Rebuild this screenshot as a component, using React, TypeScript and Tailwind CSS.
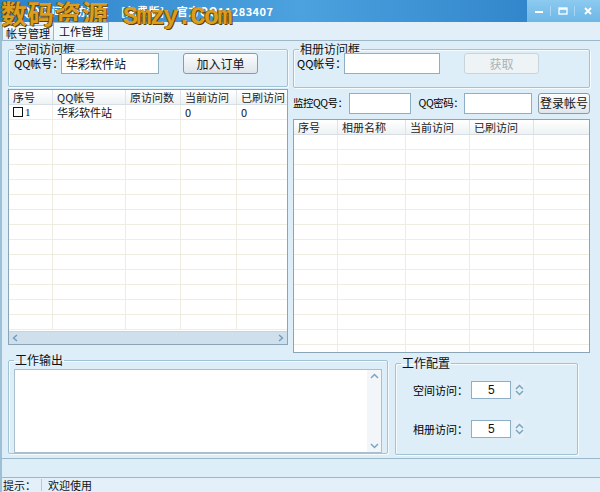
import React from "react";

const F = "font-['Noto_Sans_CJK_SC','Liberation_Sans',sans-serif]";

function Fieldset({ title, className, children }: { title: string; className?: string; children?: React.ReactNode }) {
  return (
    <fieldset className={`border border-[#9ec4d6] rounded-[2px] shadow-[inset_1px_1px_0_#f6fbfe,1px_1px_0_#f6fbfe] ${className ?? ""}`}>
      <legend className="ml-[5px] px-[1px] text-[12px] leading-[12px] text-[#111]">{title}</legend>
      {children}
    </fieldset>
  );
}

function TextInput({ value, className }: { value?: string; className?: string }) {
  return (
    <div className={`bg-white border border-[#8fb0c4] h-[21px] shrink-0 flex items-center px-[4px] text-[12px] text-[#111] ${className ?? ""}`}>
      {value}
    </div>
  );
}

function Btn({ label, className, disabled }: { label: string; className?: string; disabled?: boolean }) {
  return (
    <div
      className={`h-[21px] shrink-0 flex items-center justify-center rounded-[3px] border text-[12px] ${
        disabled
          ? "border-[#c8d4dc] bg-[#eef3f6] text-[#a9b2b8]"
          : "border-[#8a9aa6] bg-gradient-to-b from-[#fbfcfd] to-[#dfe6eb] text-[#111]"
      } ${className ?? ""}`}
    >
      {label}
    </div>
  );
}

function Table({ cols, rows, count, className, children }: { cols: { t: string; w: number }[]; rows: string[][]; count: number; className?: string; children?: React.ReactNode }) {
  const all = Array.from({ length: count }, (_, i) => rows[i] ?? cols.map(() => ""));
  return (
    <div className={`bg-white border border-[#8aa6b6] flex flex-col overflow-hidden ${className ?? ""}`}>
      <div className="flex h-[15px] bg-gradient-to-b from-white to-[#eef2f4] border-b border-[#d8dfe4] shrink-0">
        {cols.map((c, i) => (
          <div key={i} style={{ width: c.w }} className="shrink-0 flex items-center pl-[4px] text-[11px] text-[#222] border-r border-[#dde3e7] leading-none overflow-hidden">
            {c.t}
          </div>
        ))}
      </div>
      <div className="flex-1 overflow-hidden">
        {all.map((r, ri) => (
          <div key={ri} className="flex h-[15px] border-b border-[#efece2]">
            {cols.map((c, ci) => (
              <div key={ci} style={{ width: c.w }} className="shrink-0 flex items-center pl-[4px] text-[11px] text-[#111] border-r border-[#efece2] leading-none overflow-hidden">
                {ri === 0 && ci === 0 && r[0] !== "" ? (
                  <span className="flex items-center gap-[2px]">
                    <span className="w-[10px] h-[10px] border-[1.5px] border-[#111] inline-block" />
                    <span className="font-['Liberation_Serif',serif]">{r[0]}</span>
                  </span>
                ) : (
                  r[ci]
                )}
              </div>
            ))}
          </div>
        ))}
      </div>
      {children}
    </div>
  );
}

function Spin({ value }: { value: string }) {
  return (
    <div className="flex items-center gap-[3px]">
      <div className="w-[40px] h-[18px] bg-white border border-[#8fb0c4] flex items-center pl-[16px] text-[12px] text-[#111] font-['Liberation_Sans',sans-serif]">
        {value}
      </div>
      <div className="flex flex-col items-center justify-center w-[10px] h-[18px] bg-[#e4eff7]">
        <svg width="9" height="6" viewBox="0 0 9 6"><path d="M1 5 L4.5 1.5 L8 5" fill="none" stroke="#7aa6c4" strokeWidth="1.5" /></svg>
        <svg width="9" height="6" viewBox="0 0 9 6"><path d="M1 1 L4.5 4.5 L8 1" fill="none" stroke="#7aa6c4" strokeWidth="1.5" /></svg>
      </div>
    </div>
  );
}

export default function App() {
  const leftCols = [
    { t: "序号", w: 44 },
    { t: "QQ帐号", w: 73 },
    { t: "原访问数", w: 55 },
    { t: "当前访问", w: 56 },
    { t: "已刷访问", w: 52 },
  ];
  const rightCols = [
    { t: "序号", w: 44 },
    { t: "相册名称", w: 68 },
    { t: "当前访问", w: 64 },
    { t: "已刷访问", w: 64 },
    { t: "", w: 56 },
  ];
  return (
    <div className={`${F} whitespace-nowrap w-[600px] h-[492px] bg-[#dcecf7] flex flex-col overflow-hidden relative`}>
      {/* title bar */}
      <div className="h-[22px] shrink-0 flex bg-gradient-to-r from-[#2d83ca] via-[#4ba2de] to-[#2a7dc5] relative">
        <div className="flex-1 flex items-center pl-[22px] text-white text-[11px] font-bold whitespace-pre tracking-[0.5px]">
          {"QQ空间刷访问王    [免费版]    官方QQ11283407"}
        </div>
        <div className="w-[73px] flex items-center bg-gradient-to-b from-[#8ccaf0] to-[#6db7e6]">
          <div className="w-[24px] flex justify-center border-r border-[#a6d6f4]">
            <svg width="10" height="10" viewBox="0 0 10 10"><path d="M1 6 H9" stroke="white" strokeWidth="2" /></svg>
          </div>
          <div className="w-[24px] flex justify-center border-r border-[#a6d6f4]">
            <svg width="10" height="10" viewBox="0 0 10 10"><rect x="1" y="2" width="8" height="6" fill="none" stroke="white" strokeWidth="1.3" /><path d="M1 3 H9" stroke="white" strokeWidth="1.5" /></svg>
          </div>
          <div className="flex-1 flex justify-center">
            <svg width="10" height="10" viewBox="0 0 10 10"><path d="M2 2 L8 8 M8 2 L2 8" stroke="white" strokeWidth="1.8" /></svg>
          </div>
        </div>
        {/* watermark overlay */}
        <div className="absolute left-[1px] top-[-2px] flex items-baseline gap-[14px] pointer-events-none">
          <span className="text-[26px] font-bold leading-[30px] text-[#dc9c1c] tracking-[1px] [text-shadow:1px_1px_0_#5e4006,-1px_0_0_#7a5510]">数码资源</span>
          <span className="text-[25px] font-bold leading-[30px] text-[#dc9c1c] tracking-[-1.5px] font-['Liberation_Mono',monospace] [text-shadow:1px_1px_0_#5e4006,-1px_0_0_#7a5510]">Smzy.Com</span>
        </div>
      </div>

      {/* tab strip */}
      <div className="h-[18px] shrink-0 bg-[#e3eff8] flex items-end pl-[2px]">
        <div className="h-[15px] px-[3px] flex items-center text-[11px] text-[#111] border border-b-0 border-[#9ab8c8] bg-gradient-to-b from-[#f4f9fc] to-[#e2eef6]">帐号管理</div>
        <div className="h-[18px] px-[5px] flex items-center text-[11px] text-[#111] border border-b-0 border-[#9ab8c8] bg-[#f1f8fc] -ml-[1px] relative z-10">工作管理</div>
      </div>

      {/* tab panel */}
      <div className="h-[419px] shrink-0 border-t border-b border-[#9ab8c8] bg-[#deeef8] flex flex-col px-[8px] pt-[2px]">
        <div className="flex gap-[5px]">
          {/* left column */}
          <div className="w-[280px] flex flex-col">
            <Fieldset title="空间访问框" className="h-[44px]">
              <div className="flex items-center h-full pl-[5px] -mt-[2px]">
                <span className="text-[11px] w-[47px]">QQ帐号：</span>
                <TextInput value="华彩软件站" className="w-[98px]" />
                <Btn label="加入订单" className="w-[75px] ml-[24px]" />
              </div>
            </Fieldset>
            <Table cols={leftCols} rows={[["1", "华彩软件站", "", "0", "0"]]} count={15} className="h-[256px] mt-[2px]">
              <div className="h-[13px] shrink-0 bg-[#cfe0ec] flex items-center justify-between px-[3px] border-t border-[#c0d4e2]">
                <svg width="6" height="8" viewBox="0 0 6 8"><path d="M5 1 L1.5 4 L5 7" fill="none" stroke="#6d9cc0" strokeWidth="1.4" /></svg>
                <svg width="6" height="8" viewBox="0 0 6 8"><path d="M1 1 L4.5 4 L1 7" fill="none" stroke="#6d9cc0" strokeWidth="1.4" /></svg>
              </div>
            </Table>
          </div>
          {/* right column */}
          <div className="w-[297px] flex flex-col">
            <Fieldset title="相册访问框" className="h-[45px]">
              <div className="flex items-center h-full pl-[3px] -mt-[2px]">
                <span className="text-[11px] w-[47px]">QQ帐号：</span>
                <TextInput className="w-[96px]" />
                <Btn label="获取" disabled className="w-[75px] ml-[24px]" />
              </div>
            </Fieldset>
            <div className="flex items-center mt-[5px] h-[20px]">
              <span className="text-[10.5px] tracking-[-0.5px] shrink-0 pr-[1px]">监控QQ号：</span>
              <TextInput className="w-[62px] h-[20px]" />
              <span className="text-[10.5px] tracking-[-0.5px] shrink-0 ml-[8px] pr-[1px]">QQ密码：</span>
              <TextInput className="w-[68px] h-[20px]" />
              <Btn label="登录帐号" className="w-[52px] ml-auto h-[20px] text-[11px]" />
            </div>
            <Table cols={rightCols} rows={[]} count={15} className="h-[234px] mt-[6px]" />
          </div>
        </div>

        {/* bottom row */}
        <div className="flex mt-[1px]">
          <Fieldset title="工作输出" className="w-[380px] h-[100px]">
            <div className="mx-[5px] mt-[3px] h-[84px] bg-white border border-[#a9c0cc] flex justify-end">
              <div className="w-[14px] h-full bg-[#f2f6f8] flex flex-col justify-between items-center py-[3px]">
                <svg width="9" height="6" viewBox="0 0 9 6"><path d="M1 5 L4.5 1.5 L8 5" fill="none" stroke="#7aa6c4" strokeWidth="1.5" /></svg>
                <svg width="9" height="6" viewBox="0 0 9 6"><path d="M1 1 L4.5 4.5 L8 1" fill="none" stroke="#7aa6c4" strokeWidth="1.5" /></svg>
              </div>
            </div>
          </Fieldset>
          <Fieldset title="工作配置" className="w-[183px] h-[98px] ml-[7px] mt-[3px]">
            <div className="flex flex-col pl-[17px] pt-[12px] gap-[21px]">
              <div className="flex items-center">
                <span className="text-[11px] w-[58px]">空间访问：</span>
                <Spin value="5" />
              </div>
              <div className="flex items-center">
                <span className="text-[11px] w-[58px]">相册访问：</span>
                <Spin value="5" />
              </div>
            </div>
          </Fieldset>
        </div>
      </div>

      <div className="h-[18px] shrink-0 bg-[#deeef8]" />

      {/* status bar */}
      <div className="flex-1 border-t border-[#9ab8c8] bg-[#e3f0f9] flex items-center text-[11px] leading-none text-[#111]">
        <span className="pl-[3px] w-[41px]">提示：</span>
        <span className="h-[12px] border-l border-[#b9c9d3]" />
        <span className="pl-[6px]">欢迎使用</span>
      </div>
      <div className="absolute left-0 top-[22px] bottom-0 w-[2px] bg-[#9cc0d6]" />
    </div>
  );
}
